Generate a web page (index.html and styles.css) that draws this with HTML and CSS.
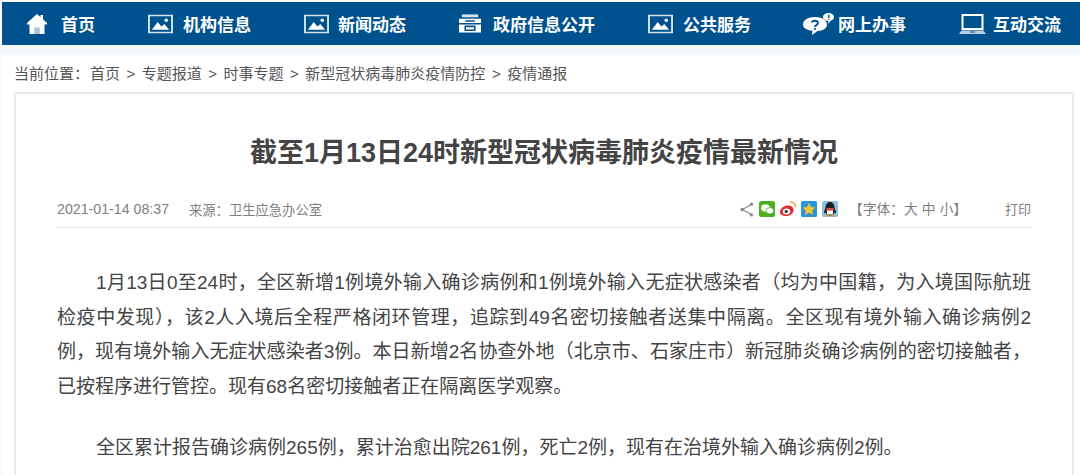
FILE: index.html
```html
<!DOCTYPE html>
<html lang="zh-CN">
<head>
    <meta charset="UTF-8">
    <title>截至1月13日24时新型冠状病毒肺炎疫情最新情况</title>
    <link rel="stylesheet" href="styles.css">
</head>
<body>
    <nav class="nav">
        <a class="nav-item nav-home">
            <svg class="icon" width="20" height="20" viewBox="0 0 20 20"><path d="M10 0 L13.500 3 V1 H16 V5.200 L20 9 V10.500 H17.500 V20 H2.500 V10.500 H0 V9 Z" fill="#fff"/><path d="M7.200 13.500 H12.800 V20 H7.200 Z" fill="#a9c4dc"/></svg>
            <span>首页</span>
        </a>
        <a class="nav-item nav-org">
            <svg class="icon" width="25" height="20" viewBox="0 0 26 20"><use href="#pic"/></svg>
            <span>机构信息</span>
        </a>
        <a class="nav-item nav-news">
            <svg class="icon" width="25" height="20" viewBox="0 0 26 20"><use href="#pic"/></svg>
            <span>新闻动态</span>
        </a>
        <a class="nav-item nav-gov">
            <svg class="icon" width="22" height="19" viewBox="0 0 23 19"><path d="M3 0 H20 V3 H3 Z" fill="#d5e3ef"/><path d="M0 4.500 H23 V9 H0 Z M0 10.500 H23 V19 H0 Z" fill="#fff"/><path d="M6.500 7 H16.500 M6.500 12.500 H16.500 V16.500 H6.500 Z" fill="none" stroke="#00528f" stroke-width="1.600"/></svg>
            <span>政府信息公开</span>
        </a>
        <a class="nav-item nav-public">
            <svg class="icon" width="25" height="20" viewBox="0 0 26 20"><use href="#pic"/></svg>
            <span>公共服务</span>
        </a>
        <a class="nav-item nav-online">
            <svg class="icon" width="31" height="22" viewBox="0 0 31 22"><path d="M12 4 C19 4 24 7 24 11.500 C24 15.500 19.500 18 14.500 18 L9 22 L9.500 17.800 C4 17.300 0 15 0 11.500 C0 7 5 4 12 4 Z" fill="#fff"/><path d="M8.800 9.500 C9.300 7 15 7 15 10 C15 12 12 12 12 14" fill="none" stroke="#00528f" stroke-width="1.900"/><circle cx="12" cy="16" r="1.100" fill="#00528f"/><path d="M25.500 0 C28.800 0 31 1.800 31 4 C31 6 29.500 7.300 27.500 7.700 L25.500 11 L25.300 8 C22.500 7.800 20 6.200 20 4 C20 1.800 22.500 0 25.500 0 Z" fill="#fff"/><path d="M25.800 1.800 V5 M25.800 5.800 V6.800" stroke="#00528f" stroke-width="1.400"/></svg>
            <span>网上办事</span>
        </a>
        <a class="nav-item nav-talk">
            <svg class="icon" width="27" height="20" viewBox="0 0 27 20"><path d="M3.500 1 H23.500 V15 H3.500 Z" fill="none" stroke="#fff" stroke-width="2"/><path d="M2.500 16.500 H24.500 L27 20 H0 Z" fill="#b9d0e4"/><path d="M11 17.500 H16 V18.500 H11 Z" fill="#00528f"/></svg>
            <span>互动交流</span>
        </a>
        <svg class="defs" width="0" height="0">
            <symbol id="pic" viewBox="0 0 26 20">
                <path d="M1 1 H25 V19 H1 Z" fill="none" stroke="#d5e3ef" stroke-width="2"/>
                <path d="M4 16 L10 8 L14 12.500 L17 10 L22 16 Z" fill="#fff"/>
                <circle cx="19" cy="6" r="1.800" fill="#fff"/>
            </symbol>
        </svg>
    </nav>

    <div class="page">
        <div class="crumbs">当前位置：<span class="crumb-first">首页</span><i>&gt;</i>专题报道<i>&gt;</i>时事专题<i>&gt;</i>新型冠状病毒肺炎疫情防控<i>&gt;</i>疫情通报</div>

        <div class="article">
            <h1 class="title">截至1月13日24时新型冠状病毒肺炎疫情最新情况</h1>

            <div class="meta">
                <span class="date">2021-01-14 08:37</span>
                <span class="source">来源：卫生应急办公室</span>
                <div class="tools">
                    <svg class="share" width="14" height="15" viewBox="0 0 14 15"><path d="M12 2 L2.500 7.500 L12 13" fill="none" stroke="#888" stroke-width="1.100"/><circle cx="11.500" cy="2.200" r="1.600" fill="#888"/><circle cx="2.300" cy="7.500" r="1.800" fill="#888"/><circle cx="11.500" cy="12.800" r="1.600" fill="#888"/></svg>
                    <svg class="sns" width="16" height="16" viewBox="0 0 16 16"><rect width="16" height="16" rx="2.500" fill="#4cae1c"/><ellipse cx="6.500" cy="7" rx="4.500" ry="3.800" fill="#fff"/><ellipse cx="10.800" cy="9.800" rx="3.800" ry="3.200" fill="#fff" stroke="#4cae1c" stroke-width=".8"/></svg>
                    <svg class="sns" width="16" height="16" viewBox="0 0 16 16"><path d="M7 4.500 C10.800 4 13.500 6 13.500 9 C13.500 12.500 10 15 6.500 15 C3 15 0 13.500 0 11 C0 8.500 3 5 7 4.500 Z" fill="#e0282c"/><ellipse cx="6.500" cy="10.500" rx="3.800" ry="3" fill="#fff"/><circle cx="6.200" cy="10.500" r="1.600" fill="#222"/><path d="M10 1 C13 .5 16 3 15.500 6.500" fill="none" stroke="#f0a030" stroke-width="1.500"/></svg>
                    <svg class="sns" width="16" height="16" viewBox="0 0 16 16"><rect width="16" height="16" rx="1.500" fill="#2b95dc"/><path d="M8 1.800 L10 6 L14.500 6.500 L11.200 9.500 L12 14 L8 11.800 L4 14 L4.800 9.500 L1.500 6.500 L6 6 Z" fill="#f5c52c"/></svg>
                    <svg class="sns" width="16" height="16" viewBox="0 0 16 16"><rect width="16" height="16" rx="1.500" fill="#8fbfe6"/><path d="M8 1 C11 1 12.500 3.500 12.500 6.500 C12.500 8 14.500 10.500 14 12.500 L12.500 11.500 C12 13 11 14 10 14.500 H6 C5 14 4 13 3.500 11.500 L2 12.500 C1.500 10.500 3.500 8 3.500 6.500 C3.500 3.500 5 1 8 1 Z" fill="#222"/><path d="M5 7.500 H11 V13.500 H5 Z" fill="#fff"/><path d="M3.800 7.500 H12.200 L11.800 9.500 H4.200 Z" fill="#e0382c"/><path d="M3 14 H7 V15.500 H3 Z M9 14 H13 V15.500 H9 Z" fill="#f0a030"/></svg>
                    <span class="font-size">【字体：大 中 小】</span>
                    <span class="print">打印</span>
                </div>
            </div>

            <div class="body">
                <p>1月13日0至24时，全区新增1例境外输入确诊病例和1例境外输入无症状感染者（均为中国籍，为入境国际航班检疫中发现），该2人入境后全程严格闭环管理，追踪到49名密切接触者送集中隔离。全区现有境外输入确诊病例2例，现有境外输入无症状感染者3例。本日新增2名协查外地（北京市、石家庄市）新冠肺炎确诊病例的密切接触者，已按程序进行管控。现有68名密切接触者正在隔离医学观察。</p>
                <p>全区累计报告确诊病例265例，累计治愈出院261例，死亡2例，现有在治境外输入确诊病例2例。</p>
            </div>
        </div>
    </div>
</body>
</html>
```

FILE: styles.css
```css
* {
    margin: 0;
    padding: 0;
    box-sizing: border-box;
}

html, body {
    height: 475px;
    overflow: hidden;
}

body {
    font-family: "Liberation Sans", "Noto Sans CJK SC", sans-serif;
    background: #fff;
    color: #333;
    padding-top: 2px;
}

.nav {
    display: flex;
    align-items: center;
    height: 43px;
    margin-left: 2px;
    background: #00528f;
    color: #fff;
    padding-left: 25px;
}

.nav-item {
    display: flex;
    align-items: center;
    gap: 14px;
    font-size: 17px;
    font-weight: 700;
    white-space: nowrap;
}

.nav-home { width: 121px; }
.nav-org { width: 156px; gap: 10px; }
.nav-news { width: 155px; gap: 9px; }
.nav-gov { width: 189px; gap: 12px; }
.nav-public { width: 155px; gap: 10px; }
.nav-online { width: 156px; gap: 4px; }
.nav-talk { gap: 7px; }

.defs {
    position: absolute;
}

.page {
    border-top: 9px solid #f5f8fd;
    border-left: 2px solid #f5f8fd;
    padding: 10px 6px 0 12px;
}

.crumbs {
    font-size: 15px;
    line-height: 20px;
    color: #555;
    height: 28px;
}

.crumb-first {
    margin-left: 1px;
}

.crumbs i {
    font-style: normal;
    margin: 0 6.500px;
}

.article {
    border: 2px solid #ebebeb;
    border-bottom: none;
    padding: 0 41px;
    height: 400px;
}

.title {
    font-size: 27px;
    line-height: 36px;
    font-weight: 700;
    color: #444;
    text-align: center;
    padding-top: 41px;
    height: 79px;
}

.meta {
    display: flex;
    align-items: center;
    height: 37px;
    margin-top: 18px;
    border-bottom: 1px solid #e2e2e2;
    font-size: 14.200px;
    color: #808080;
}

.source {
    margin-left: 20px;
    font-size: 13.300px;
}

.tools {
    display: flex;
    align-items: center;
    margin-left: auto;
    gap: 5px;
    font-size: 13px;
}

.font-size {
    margin: 0 0 2px 6px;
    font-size: 13.800px;
}

.print {
    margin: 0 0 2px 33px;
}

.body {
    padding-top: 38px;
    font-size: 19px;
    line-height: 34.700px;
    color: #444;
}

.body p {
    text-indent: 39px;
    text-align: justify;
    margin-bottom: 26px;
}
```
